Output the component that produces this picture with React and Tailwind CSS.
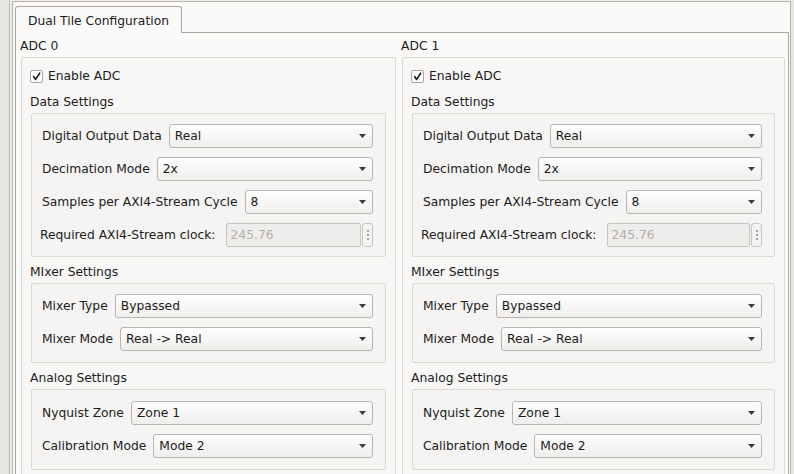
import React from "react";

function Arrow() {
  return (
    <svg width="7" height="4" viewBox="0 0 7 4" className="shrink-0">
      <path d="M0 0H7L3.5 4Z" fill="#3b3b3b" />
    </svg>
  );
}

function Combo({ value }) {
  return (
    <div className="flex-1 min-w-0 h-[24px] flex items-center justify-between rounded-[3px] border border-[#b9b6b2] bg-gradient-to-b from-[#fefefe] to-[#efeeec] pl-[5px] pr-[6px]">
      <span className="whitespace-nowrap">{value}</span>
      <Arrow />
    </div>
  );
}

function Row({ label, value }) {
  return (
    <div className="flex items-center h-[24px] gap-[7px]">
      <span className="shrink-0 whitespace-nowrap">{label}</span>
      <Combo value={value} />
    </div>
  );
}

function ClockRow() {
  return (
    <div className="flex items-center h-[24px] -ml-[2px]">
      <span className="shrink-0 whitespace-nowrap mr-[10px]">Required AXI4-Stream clock:</span>
      <div className="flex-1 min-w-0 h-[24px] flex items-center rounded-[2px] border border-[#c8c5c1] bg-[#efedeb] pl-[4px] text-[#b3b0ac]">
        245.76
      </div>
      <div className="ml-[1px] w-[11px] h-[24px] shrink-0 rounded-[3px] border border-[#c8c5c1] bg-[#f4f3f1] flex flex-col items-center justify-center gap-[2px]">
        <div className="w-[2px] h-[2px] rounded-full bg-[#8c8985]"></div>
        <div className="w-[2px] h-[2px] rounded-full bg-[#8c8985]"></div>
        <div className="w-[2px] h-[2px] rounded-full bg-[#8c8985]"></div>
      </div>
    </div>
  );
}

function Group({ pt, pb, children }) {
  return (
    <div className={`border border-[#dcd8d4] rounded-[2px] bg-[#f5f4f2] pl-[10px] pr-[12px] ${pt} ${pb} flex flex-col gap-[9px]`}>
      {children}
    </div>
  );
}

function AdcColumn({ title, width }) {
  return (
    <div className={`${width} shrink-0 flex flex-col`}>
      <div className="h-[14px] mb-[4px] -ml-[1px] whitespace-nowrap">{title}</div>
      <div className="border border-[#dcd8d4] rounded-[2px] bg-[#f8f7f5] px-[9px] pt-[11px] pb-[40px]">
        <div className="flex items-center h-[14px] -ml-[1px]">
          <div className="w-[13px] h-[13px] rounded-[2px] border border-[#a9a6a2] bg-white flex items-center justify-center">
            <svg width="11" height="11" viewBox="0 0 11 11">
              <path d="M2.6 5.6 L4.6 8.4 L8.6 2.2" fill="none" stroke="#222" strokeWidth="1.7" strokeLinecap="round" strokeLinejoin="round" />
            </svg>
          </div>
          <span className="ml-[5px] whitespace-nowrap">Enable ADC</span>
        </div>

        <div className="mt-[12px] mb-[4px] h-[14px] -ml-[1px] whitespace-nowrap">Data Settings</div>
        <Group pt="pt-[10px]" pb="pb-[9px]">
          <Row label="Digital Output Data" value="Real" />
          <Row label="Decimation Mode" value="2x" />
          <Row label="Samples per AXI4-Stream Cycle" value="8" />
          <ClockRow />
        </Group>

        <div className="mt-[8px] mb-[4px] h-[14px] -ml-[1px] whitespace-nowrap">MIxer Settings</div>
        <Group pt="pt-[10px]" pb="pb-[11px]">
          <Row label="Mixer Type" value="Bypassed" />
          <Row label="Mixer Mode" value="Real -> Real" />
        </Group>

        <div className="mt-[8px] mb-[4px] h-[14px] -ml-[1px] whitespace-nowrap">Analog Settings</div>
        <Group pt="pt-[11px]" pb="pb-[11px]">
          <Row label="Nyquist Zone" value="Zone 1" />
          <Row label="Calibration Mode" value="Mode 2" />
        </Group>
      </div>
    </div>
  );
}

export default function App() {
  return (
    <div className="w-[794px] h-[474px] overflow-hidden bg-[#e7e5e2] flex font-['DejaVu_Sans',sans-serif] text-[12.3px] leading-[14px] text-[#1c1c1c]">
      <div className="ml-[9px] w-[782px] h-full shrink-0 border-l border-[#bcb8b4] bg-[#efedea] pl-[2px] pt-[1px]">
        <div className="w-[779px] h-full border-l border-t border-r border-[#b6b2ae] bg-[#fbfaf8] pl-[2px] pr-[1px] pt-[4px] flex flex-col">
          <div className="flex h-[27px] shrink-0">
            <div className="h-[27px] border-l border-t border-r border-[#aaa6a2] rounded-t-[3px] px-[12px] pt-[7px] bg-[#fbfaf8] whitespace-nowrap">
              Dual Tile Configuration
            </div>
            <div className="flex-1 h-[27px] border-b border-[#aaa6a2]"></div>
          </div>
          <div className="flex-1 min-h-0 border-l border-r border-[#aaa6a2] pl-[5px] pt-[6px] flex gap-[6px] overflow-hidden">
            <AdcColumn title="ADC 0" width="w-[375px]" />
            <AdcColumn title="ADC 1" width="w-[383px]" />
          </div>
        </div>
      </div>
    </div>
  );
}
